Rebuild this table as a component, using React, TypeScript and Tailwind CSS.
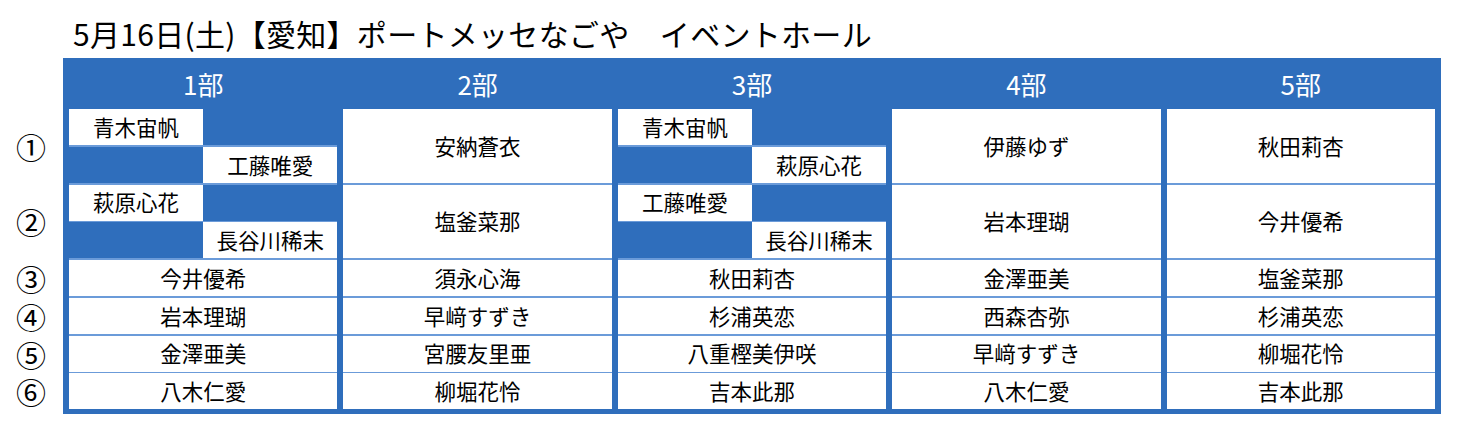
const BLUE = "bg-[#2f6ebc]";

type Cell = string | [string, string];

const columns: { title: string; cells: Cell[] }[] = [
  {
    title: "1部",
    cells: [["青木宙帆", "工藤唯愛"], ["萩原心花", "長谷川稀末"], "今井優希", "岩本理瑚", "金澤亜美", "八木仁愛"],
  },
  {
    title: "2部",
    cells: ["安納蒼衣", "塩釜菜那", "須永心海", "早﨑すずき", "宮腰友里亜", "柳堀花怜"],
  },
  {
    title: "3部",
    cells: [["青木宙帆", "萩原心花"], ["工藤唯愛", "長谷川稀末"], "秋田莉杏", "杉浦英恋", "八重樫美伊咲", "吉本此那"],
  },
  {
    title: "4部",
    cells: ["伊藤ゆず", "岩本理瑚", "金澤亜美", "西森杏弥", "早﨑すずき", "八木仁愛"],
  },
  {
    title: "5部",
    cells: ["秋田莉杏", "今井優希", "塩釜菜那", "杉浦英恋", "柳堀花怜", "吉本此那"],
  },
];

const marks = ["①", "②", "③", "④", "⑤", "⑥"];

function rowSpan(i: number) {
  return i < 2 ? "row-span-2" : "row-span-1";
}

function Column({ cells }: { cells: Cell[] }) {
  return (
    <div className="grid grid-rows-[repeat(8,36px)] gap-y-[1.75px] bg-[#6b9bd9]">
      {cells.map((c, i) => {
        if (Array.isArray(c)) {
          return (
            <div key={i} className="row-span-2 grid grid-cols-2 grid-rows-[36px_36px] gap-y-[1.75px]">
              <div className="bg-white flex items-center justify-center">{c[0]}</div>
              <div className={BLUE} />
              <div className={BLUE} />
              <div className="bg-white flex items-center justify-center">{c[1]}</div>
            </div>
          );
        }
        return (
          <div key={i} className={`${rowSpan(i)} bg-white flex items-center justify-center`}>
            {c}
          </div>
        );
      })}
    </div>
  );
}

export default function App() {
  return (
    <div className="w-[1467px] h-[435px] bg-white text-black font-['Noto_Sans_CJK_JP','Noto_Sans',sans-serif]">
      <div className="h-[58px] pl-[73px] pt-[18px] text-[30px] leading-[30px] tracking-[0.3px] whitespace-pre">
        5月16日(土)【愛知】ポートメッセなごや　イベントホール
      </div>

      <div className="flex">
        {/* circled row numbers */}
        <div className="w-[63px] shrink-0">
          <div className="h-[51px]" />
          <div className="grid grid-rows-[repeat(8,36px)] gap-y-[1.75px]">
            {marks.map((m, i) => (
              <div key={m} className={`${rowSpan(i)} flex items-center justify-center pr-[1px] text-[30px] leading-[30px]`}>
                {m}
              </div>
            ))}
          </div>
        </div>

        {/* table */}
        <div className={`w-[1378px] ${BLUE} px-[6px] pb-[5px]`}>
          <div className="h-[51px] grid grid-cols-5 gap-x-[6px] text-white text-[26px]">
            {columns.map((col) => (
              <div key={col.title} className="flex items-center justify-center">
                {col.title}
              </div>
            ))}
          </div>
          <div className="grid grid-cols-5 gap-x-[6px] text-[21.5px]">
            {columns.map((col) => (
              <Column key={col.title} cells={col.cells} />
            ))}
          </div>
        </div>
      </div>
    </div>
  );
}
